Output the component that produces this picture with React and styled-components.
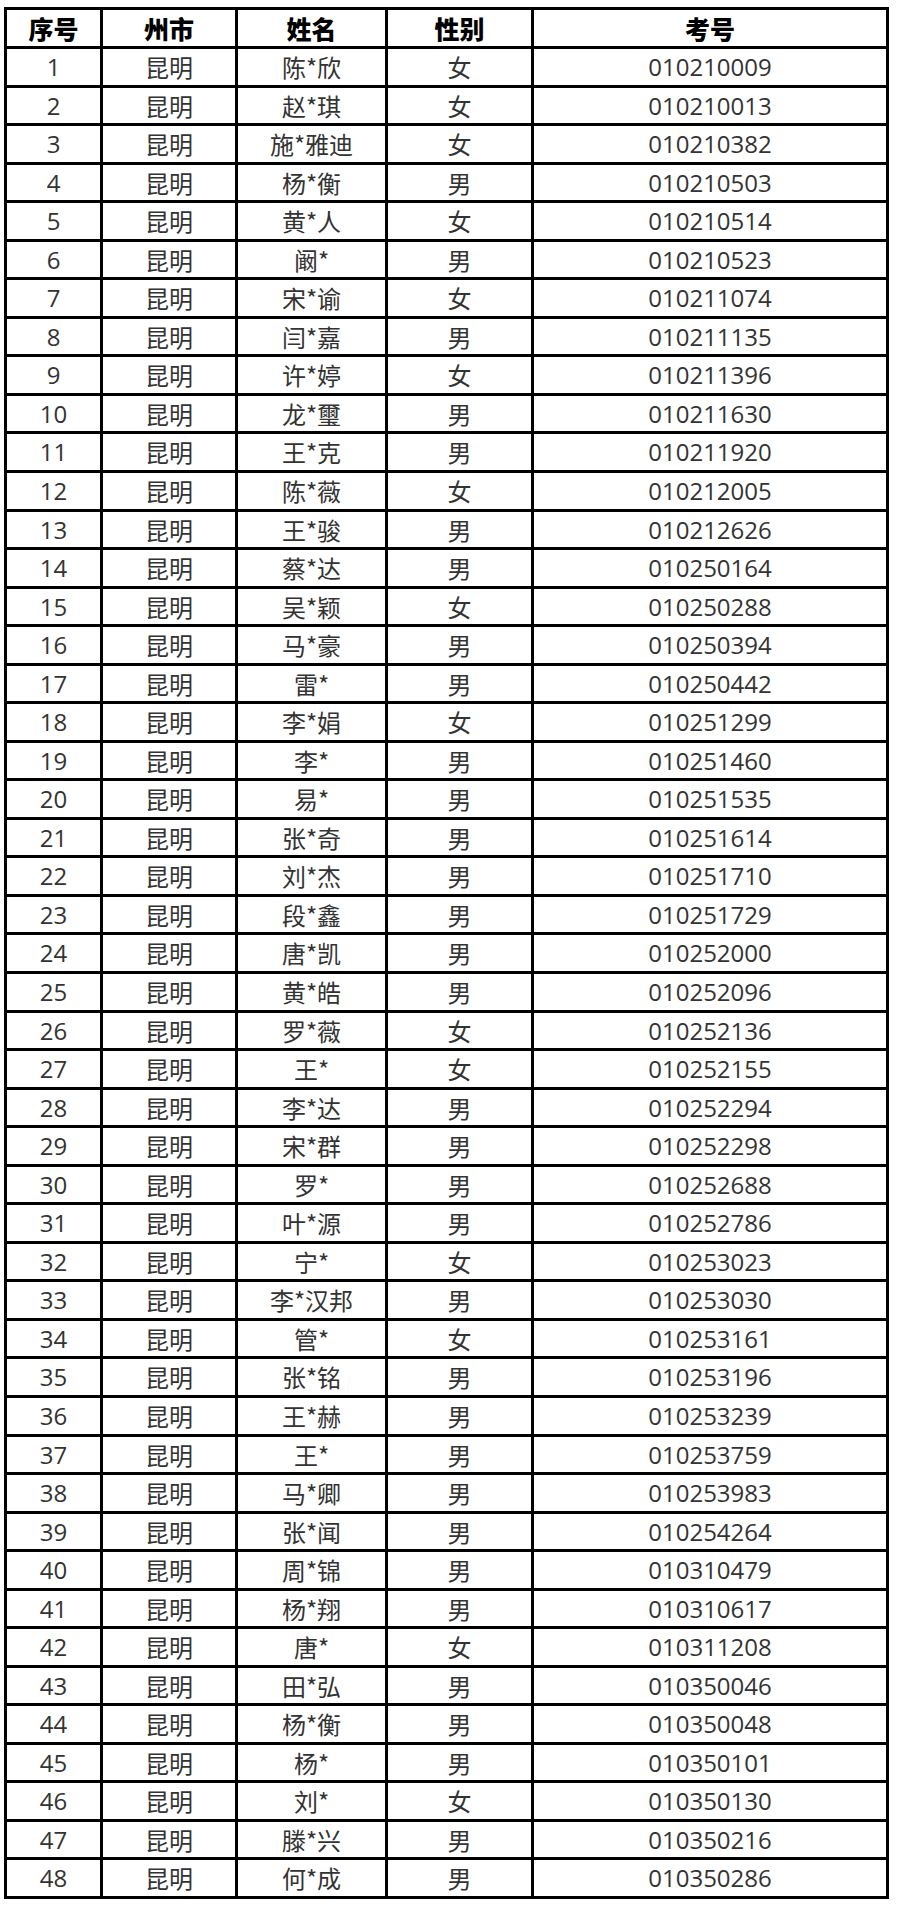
import React from "react";
import styled, { createGlobalStyle } from "styled-components";

const GlobalStyle = createGlobalStyle`
  html, body {
    margin: 0;
    padding: 0;
    background: #ffffff;
  }
`;

const Page = styled.div`
  padding: 7px 0 0 4px;
  width: 900px;
  height: 1909px;
  box-sizing: border-box;
  background: #ffffff;
`;

const Table = styled.table`
  border-collapse: separate;
  border-spacing: 0;
  table-layout: fixed;
  width: 885px;
  border-top: 3px solid #000;
  border-left: 3px solid #000;
  font-family: "Open Sans", "Noto Sans CJK SC", sans-serif;
`;

const Col = styled.col`
  width: ${({ $w }) => $w}px;
`;

const HeadCell = styled.th`
  box-sizing: border-box;
  height: 39px;
  padding: 0;
  border-right: 3px solid #000;
  border-bottom: 3px solid #000;
  font-family: "Noto Sans CJK SC", sans-serif;
  font-size: 25px;
  font-weight: 900;
  color: #000;
  text-align: center;
  vertical-align: middle;
  line-height: 1;
`;

const Row = styled.tr`
  height: ${({ $h }) => $h}px;
`;

const Cell = styled.td`
  box-sizing: border-box;
  padding: 0;
  border-right: 3px solid #000;
  border-bottom: 3px solid #000;
  font-family: ${({ $cjk }) =>
    $cjk ? `"Noto Sans CJK SC", sans-serif` : "inherit"};
  font-size: 24px;
  color: #333;
  text-align: center;
  vertical-align: middle;
  line-height: 1;
  white-space: nowrap;
`;

const columns = [
  { title: "序号", width: 96 },
  { title: "州市", width: 135 },
  { title: "姓名", width: 150 },
  { title: "性别", width: 146 },
  { title: "考号", width: 355 },
];

const people = [
  ["陈*欣", "女", "010210009"],
  ["赵*琪", "女", "010210013"],
  ["施*雅迪", "女", "010210382"],
  ["杨*衡", "男", "010210503"],
  ["黄*人", "女", "010210514"],
  ["阚*", "男", "010210523"],
  ["宋*谕", "女", "010211074"],
  ["闫*嘉", "男", "010211135"],
  ["许*婷", "女", "010211396"],
  ["龙*璽", "男", "010211630"],
  ["王*克", "男", "010211920"],
  ["陈*薇", "女", "010212005"],
  ["王*骏", "男", "010212626"],
  ["蔡*达", "男", "010250164"],
  ["吴*颖", "女", "010250288"],
  ["马*豪", "男", "010250394"],
  ["雷*", "男", "010250442"],
  ["李*娟", "女", "010251299"],
  ["李*", "男", "010251460"],
  ["易*", "男", "010251535"],
  ["张*奇", "男", "010251614"],
  ["刘*杰", "男", "010251710"],
  ["段*鑫", "男", "010251729"],
  ["唐*凯", "男", "010252000"],
  ["黄*皓", "男", "010252096"],
  ["罗*薇", "女", "010252136"],
  ["王*", "女", "010252155"],
  ["李*达", "男", "010252294"],
  ["宋*群", "男", "010252298"],
  ["罗*", "男", "010252688"],
  ["叶*源", "男", "010252786"],
  ["宁*", "女", "010253023"],
  ["李*汉邦", "男", "010253030"],
  ["管*", "女", "010253161"],
  ["张*铭", "男", "010253196"],
  ["王*赫", "男", "010253239"],
  ["王*", "男", "010253759"],
  ["马*卿", "男", "010253983"],
  ["张*闻", "男", "010254264"],
  ["周*锦", "男", "010310479"],
  ["杨*翔", "男", "010310617"],
  ["唐*", "女", "010311208"],
  ["田*弘", "男", "010350046"],
  ["杨*衡", "男", "010350048"],
  ["杨*", "男", "010350101"],
  ["刘*", "女", "010350130"],
  ["滕*兴", "男", "010350216"],
  ["何*成", "男", "010350286"],
];

// rows in the scan are not all the same height; spread 1850px over 48 rows
const rowHeight = (i) => {
  const step = 1850 / people.length;
  return Math.round((i + 1) * step) - Math.round(i * step);
};

const App = () => {
  return (
    <>
      <GlobalStyle />
      <Page>
        <Table>
          <colgroup>
            {columns.map((c) => (
              <Col key={c.title} $w={c.width} />
            ))}
          </colgroup>
          <thead>
            <tr>
              {columns.map((c) => (
                <HeadCell key={c.title}>{c.title}</HeadCell>
              ))}
            </tr>
          </thead>
          <tbody>
            {people.map(([name, sex, id], i) => (
              <Row key={id} $h={rowHeight(i)}>
                <Cell>{i + 1}</Cell>
                <Cell $cjk>昆明</Cell>
                <Cell $cjk>{name}</Cell>
                <Cell $cjk>{sex}</Cell>
                <Cell>{id}</Cell>
              </Row>
            ))}
          </tbody>
        </Table>
      </Page>
    </>
  );
};

export default App;
